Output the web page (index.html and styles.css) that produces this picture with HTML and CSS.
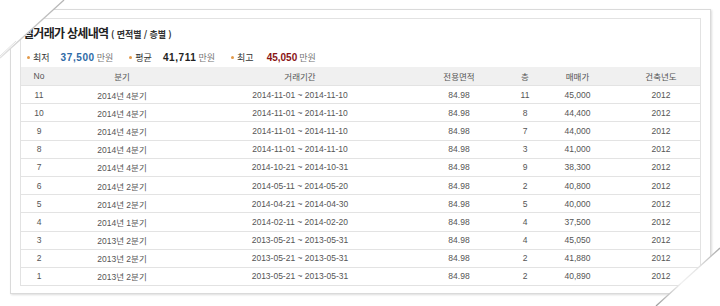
FILE: index.html
```html
<!DOCTYPE html>
<html lang="ko">
<head>
<meta charset="utf-8">
<title>실거래가 상세내역</title>
<link rel="stylesheet" href="styles.css">
</head>
<body>
<div class="page">
  <div class="frame">
    <div class="card">
      <h2 class="title">실거래가 상세내역 <span class="sub">( 면적별 / 층별 )</span></h2>
      <div class="summary">
        <span class="stat"><i class="dot"></i><span class="label">최저</span><b class="num low">37,500</b><span class="unit">만원</span></span>
        <span class="stat"><i class="dot"></i><span class="label">평균</span><b class="num avg">41,711</b><span class="unit">만원</span></span>
        <span class="stat"><i class="dot"></i><span class="label">최고</span><b class="num high">45,050</b><span class="unit">만원</span></span>
      </div>
      <table class="deals">
        <colgroup>
          <col class="c-no"><col class="c-q"><col class="c-period"><col class="c-area"><col class="c-floor"><col class="c-price"><col class="c-year">
        </colgroup>
        <thead>
          <tr><th>No</th><th>분기</th><th>거래기간</th><th>전용면적</th><th>층</th><th>매매가</th><th class="year">건축년도</th></tr>
        </thead>
        <tbody>
          <tr><td>11</td><td>2014년 4분기</td><td>2014-11-01 ~ 2014-11-10</td><td>84.98</td><td>11</td><td>45,000</td><td class="year">2012</td></tr>
          <tr><td>10</td><td>2014년 4분기</td><td>2014-11-01 ~ 2014-11-10</td><td>84.98</td><td>8</td><td>44,400</td><td class="year">2012</td></tr>
          <tr><td>9</td><td>2014년 4분기</td><td>2014-11-01 ~ 2014-11-10</td><td>84.98</td><td>7</td><td>44,000</td><td class="year">2012</td></tr>
          <tr><td>8</td><td>2014년 4분기</td><td>2014-11-01 ~ 2014-11-10</td><td>84.98</td><td>3</td><td>41,000</td><td class="year">2012</td></tr>
          <tr><td>7</td><td>2014년 4분기</td><td>2014-10-21 ~ 2014-10-31</td><td>84.98</td><td>9</td><td>38,300</td><td class="year">2012</td></tr>
          <tr><td>6</td><td>2014년 2분기</td><td>2014-05-11 ~ 2014-05-20</td><td>84.98</td><td>2</td><td>40,800</td><td class="year">2012</td></tr>
          <tr><td>5</td><td>2014년 2분기</td><td>2014-04-21 ~ 2014-04-30</td><td>84.98</td><td>5</td><td>40,000</td><td class="year">2012</td></tr>
          <tr><td>4</td><td>2014년 1분기</td><td>2014-02-11 ~ 2014-02-20</td><td>84.98</td><td>4</td><td>37,500</td><td class="year">2012</td></tr>
          <tr><td>3</td><td>2013년 2분기</td><td>2013-05-21 ~ 2013-05-31</td><td>84.98</td><td>4</td><td>45,050</td><td class="year">2012</td></tr>
          <tr><td>2</td><td>2013년 2분기</td><td>2013-05-21 ~ 2013-05-31</td><td>84.98</td><td>2</td><td>41,880</td><td class="year">2012</td></tr>
          <tr><td>1</td><td>2013년 2분기</td><td>2013-05-21 ~ 2013-05-31</td><td>84.98</td><td>2</td><td>40,890</td><td class="year">2012</td></tr>
        </tbody>
      </table>
    </div>
  </div>
  <svg class="curl" width="720" height="306" viewBox="0 0 720 306" aria-hidden="true">
    <defs>
      <linearGradient id="fadeBR" x1="720" y1="248" x2="656" y2="306" gradientUnits="userSpaceOnUse">
        <stop offset="0" stop-color="#a8a8a8"/>
        <stop offset="0.35" stop-color="#e4e4e4"/>
        <stop offset="0.6" stop-color="#f0f0f0"/>
        <stop offset="1" stop-color="#9c9c9c"/>
      </linearGradient>
      <linearGradient id="fadeTL" x1="64" y1="0" x2="0" y2="58" gradientUnits="userSpaceOnUse">
        <stop offset="0" stop-color="#b4b4b4"/>
        <stop offset="0.5" stop-color="#c6c6c6"/>
        <stop offset="1" stop-color="#e2e2e2"/>
      </linearGradient>
    </defs>
    <polygon points="0,0 64,0 0,58" fill="#ffffff"/>
    <line x1="64" y1="0" x2="0" y2="58" stroke="url(#fadeTL)" stroke-width="1.3"/>
    <line x1="16" y1="41" x2="0" y2="56" stroke="#e2e2e2" stroke-width="1"/>
    <polygon points="720,248 720,306 656,306" fill="#ffffff"/>
    <line x1="720" y1="248" x2="656" y2="306" stroke="url(#fadeBR)" stroke-width="1.3"/>
  </svg>
</div>
</body>
</html>
```
FILE: styles.css
```css
html, body {
  margin: 0;
  padding: 0;
  background: #ffffff;
}

.page {
  position: relative;
  width: 720px;
  height: 306px;
  overflow: hidden;
  font-family: "Liberation Sans", "Noto Sans CJK KR", sans-serif;
  color: #555555;
}

.frame {
  box-sizing: border-box;
  width: 701px;
  margin: 9px 0 0 10px;
  padding: 8px 9px 7px 9px;
  border: 1px solid #dadada;
  box-shadow: 1px 1px 2px rgba(0, 0, 0, 0.14);
  background: #ffffff;
}

.card {
  border: 1px solid #e2e2e2;
  background: #ffffff;
}

.title {
  margin: 0;
  padding: 5px 0 0 2px;
  height: 18px;
  line-height: 18px;
  font-family: "Noto Sans CJK KR", sans-serif;
  font-size: 12px;
  font-weight: bold;
  letter-spacing: -0.7px;
  color: #222222;
  white-space: nowrap;
}

.title .sub {
  font-size: 9px;
  letter-spacing: -0.1px;
  color: #333333;
}

.summary {
  display: flex;
  align-items: center;
  height: 14px;
  margin-top: 8px;
  padding-left: 6px;
  font-size: 9px;
  white-space: nowrap;
}

.stat {
  display: flex;
  align-items: center;
}

.stat + .stat {
  margin-left: 16px;
}

.dot {
  display: block;
  width: 3px;
  height: 3px;
  border-radius: 50%;
  background: #e39a4a;
  margin-right: 3px;
}

.label {
  font-family: "Noto Sans CJK KR", sans-serif;
  color: #333333;
}

.num {
  margin-left: 11px;
  font-size: 10px;
  letter-spacing: 0.6px;
}

.num.low { color: #2e6aa6; }
.num.avg { color: #222222; }
.num.high { color: #8a1414; letter-spacing: 0; margin-left: 13px; }

.unit {
  margin-left: 2px;
  font-family: "Noto Sans CJK KR", sans-serif;
  color: #777777;
}

.deals {
  width: 100%;
  margin-top: 3px;
  border-collapse: collapse;
  table-layout: fixed;
  font-size: 8.5px;
}

.c-no { width: 36px; }
.c-q { width: 130px; }
.c-period { width: 226px; }
.c-area { width: 92px; }
.c-floor { width: 40px; }
.c-price { width: 65px; }
.c-year { width: auto; }

.deals th,
.deals td {
  height: 17.2px;
  padding: 0;
  text-align: center;
  white-space: nowrap;
}

.deals th {
  height: 18px;
  background: #f0f0f0;
  font-weight: normal;
  color: #555555;
}

.deals td {
  border-top: 1px solid #e3e3e3;
  color: #555555;
}

.deals .year {
  padding-left: 12px;
}

.curl {
  position: absolute;
  top: 0;
  left: 0;
  pointer-events: none;
}
```
